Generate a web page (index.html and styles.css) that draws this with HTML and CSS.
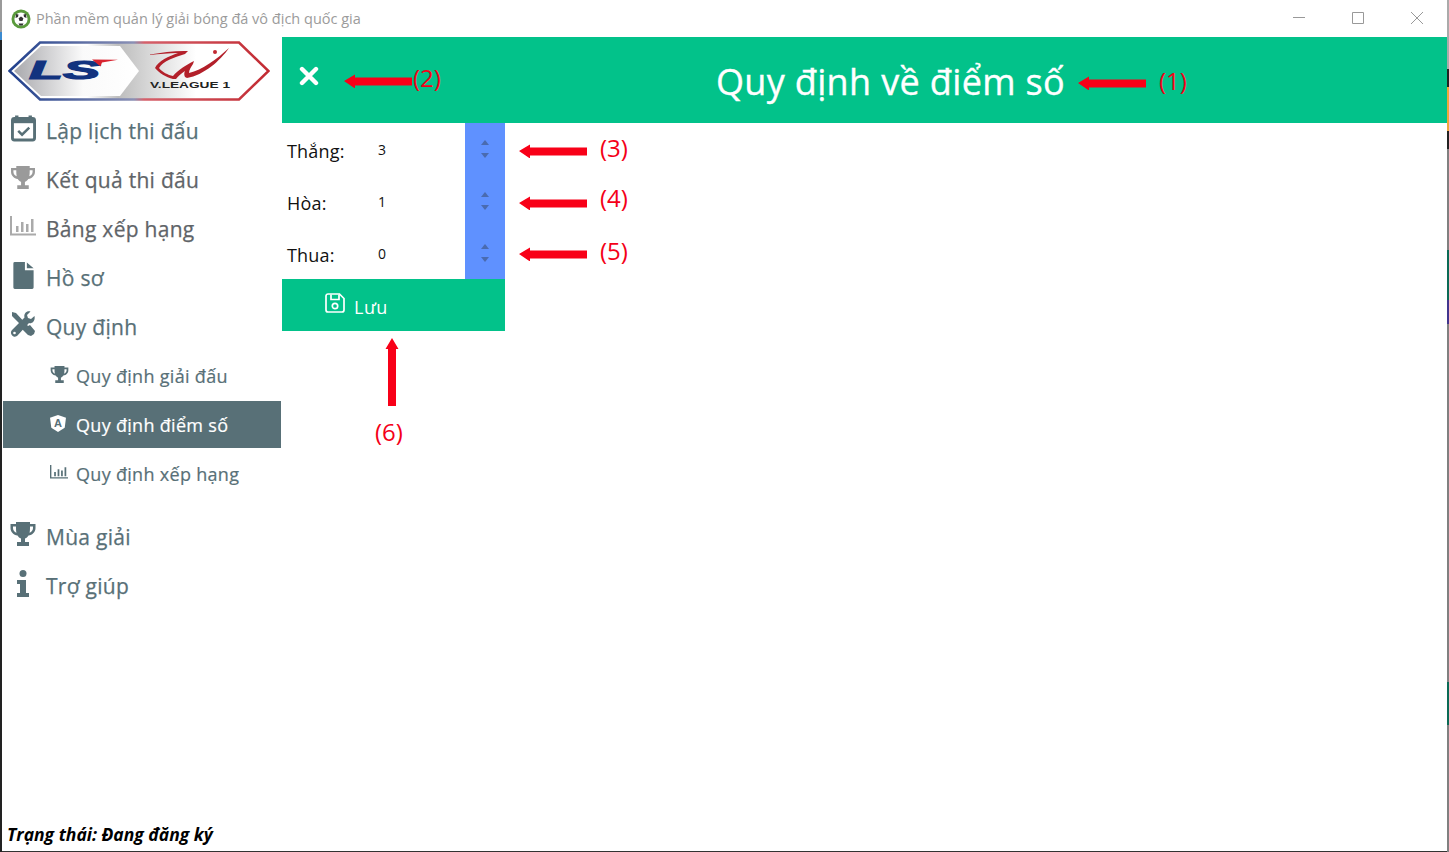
FILE: index.html
```html
<!DOCTYPE html>
<html lang="vi">
<head>
<meta charset="utf-8">
<title>Phần mềm quản lý giải bóng đá vô địch quốc gia</title>
<link rel="stylesheet" href="styles.css">
</head>
<body>
<div class="window">
  <header class="titlebar">
    <svg class="app-icon" viewBox="0 0 20 20"><circle cx="10" cy="10" r="9.500" fill="#5a9a3c"/><circle cx="10" cy="10" r="6.600" fill="#fff"/><path d="M10 7.500l2.400 1.700-.9 2.800H8.500l-.9-2.800zM5 5l2.500.5-.5 2.500-2.500 1zM15 5l-2.500.5.5 2.500 2.500 1zM7.500 14.500h5l-1 2h-3z" fill="#333"/></svg>
    <span class="app-title">Phần mềm quản lý giải bóng đá vô địch quốc gia</span>
    <div class="win-controls">
      <svg viewBox="0 0 12 12" class="win-btn"><path d="M0 5.500h12" stroke="#999" fill="none"/></svg>
      <svg viewBox="0 0 12 12" class="win-btn"><path d="M.5.500h11v11H.500z" stroke="#999" fill="none"/></svg>
      <svg viewBox="0 0 12 12" class="win-btn"><path d="M0 0l12 12M12 0L0 12" stroke="#999" fill="none"/></svg>
    </div>
  </header>
  <div class="body-row">
    <aside class="sidebar">
      <svg class="logo" viewBox="0 0 262 60">
        <defs>
          <linearGradient id="lgl" x1="0" x2="1"><stop offset="0" stop-color="#a9a9ad"/><stop offset=".55" stop-color="#fafafa"/><stop offset="1" stop-color="#fff"/></linearGradient>
          <linearGradient id="lgr" x1="0" x2="1"><stop offset="0" stop-color="#fff"/><stop offset=".3" stop-color="#fff"/><stop offset=".42" stop-color="#bdbdbd"/><stop offset=".72" stop-color="#fff"/><stop offset="1" stop-color="#fff"/></linearGradient>
          <linearGradient id="lb" x1="0" x2="1"><stop offset="0" stop-color="#1f3f8c"/><stop offset=".48" stop-color="#8a90b5"/><stop offset=".52" stop-color="#d5606a"/><stop offset="1" stop-color="#c22a32"/></linearGradient>
        </defs>
        <path d="M1.500 30L32 1.500H231L260.500 30 231 58.500H32z" fill="url(#lgr)" stroke="url(#lb)" stroke-width="2.500"/>
        <path d="M6 30L33 5H112L131 30 112 55H33z" fill="url(#lgl)"/>
        <text x="21" y="38" class="logo-ls" textLength="71" lengthAdjust="spacingAndGlyphs">LS</text>
        <path d="M84 18.500l26 .3-16 2.700-1.500 4z" fill="#d8232f"/>
        <path d="M142 13.500c12-2 26-4 38-3.500l-3 3c-10 3-22 7-26 14 3 4 9 7 14 8 5-6 13-11 21-15l-1 3c-2 3-4 6-4 9 13-3 28-14 40-25-9 13-25 27-42 30l-2-1c-1-2-1-4 0-6-4 3-7 5-9 8l-3 0c-7-2-14-6-18-11 3-7 14-12 23-15-9 0-19 1-28 2z" fill="#b3202a"/>
        <circle cx="207" cy="11" r="2" fill="#c22a32"/>
        <text x="142" y="47" class="logo-v" textLength="80" lengthAdjust="spacingAndGlyphs">V.LEAGUE 1</text>
      </svg>
      <nav class="nav">
        <a class="nav-item"><span class="nav-icon"><svg viewBox="0 0 26 28" width="25" height="28"><path d="M6 1v4M20 1v4" stroke="#587077" stroke-width="3.500"/><rect x="1.500" y="4" width="23" height="22.500" rx="2" fill="none" stroke="#587077" stroke-width="3"/><path d="M2 4h22v5H2z" fill="#587077"/><path d="M7.500 17l4 4 7.500-7.500" fill="none" stroke="#587077" stroke-width="2.600"/></svg></span>Lập lịch thi đấu</a>
        <a class="nav-item muted"><span class="nav-icon"><svg viewBox="0 0 26 24" width="26" height="23"><path d="M6 0h14v2h5.500v4c0 4-3 7-7 7.500-1 1.500-2 2.500-3.500 3V20h4v4H7v-4h4v-3.500C9.500 16 8.500 15 7.500 13.500 3.500 13 .5 10 .5 6V2H6zM3 4.500V6c0 2 1.200 4 3.500 4.800C6 9 6 7 6 4.500zM23 4.500h-3c0 2.500 0 4.500-.5 6.300C21.800 10 23 8 23 6z" fill="#9a9a9a"/></svg></span>Kết quả thi đấu</a>
        <a class="nav-item muted"><span class="nav-icon"><svg viewBox="0 0 26 20" width="26" height="20"><path d="M1 0v18.500h25" fill="none" stroke="#aaa" stroke-width="2"/><path d="M6 10h2.500v6H6zM11 6h2.500v10H11zM16 8h2.500v8H16zM21 3h2.500v13H21z" fill="#aaa"/></svg></span>Bảng xếp hạng</a>
        <a class="nav-item"><span class="nav-icon"><svg viewBox="0 0 22 28" width="22" height="27"><path d="M1 1.500A1.500 1.500 0 0 1 2.500 0H13v8.500h9v18a1.500 1.500 0 0 1-1.500 1.500h-18A1.500 1.500 0 0 1 1 26.500zM15 .500L22 6.500h-7z" fill="#587077"/></svg></span>Hồ sơ</a>
        <a class="nav-item"><span class="nav-icon"><svg viewBox="0 0 26 26" width="26" height="26"><path d="M2 1l4 1 12 13 2-1 5 6-1 3-3 2-3-1-6-6 1-2L2 5z" fill="#587077"/><path d="M24.500 5l-3.500 3-3-1-1-3 3.500-3.500c-3.500-1-7 2-6 6L2 19c-2 2-1 5 1.500 6.500 2 .5 3 0 4-1L19 12c3 1 6.500-2 5.500-7z" fill="#587077"/><circle cx="4.500" cy="22" r="1.300" fill="#fff"/></svg></span>Quy định</a>
        <a class="sub-item"><span class="sub-icon"><svg viewBox="0 0 26 24" width="19" height="17"><path d="M6 0h14v2h5.500v4c0 4-3 7-7 7.500-1 1.500-2 2.500-3.500 3V20h4v4H7v-4h4v-3.500C9.500 16 8.500 15 7.500 13.500 3.500 13 .5 10 .5 6V2H6zM3 4.500V6c0 2 1.200 4 3.500 4.800C6 9 6 7 6 4.500zM23 4.500h-3c0 2.500 0 4.500-.5 6.300C21.800 10 23 8 23 6z" fill="#587077"/></svg></span>Quy định giải đấu</a>
        <a class="sub-item active"><span class="sub-icon"><svg viewBox="0 0 16 17" width="16" height="17"><path d="M8 0l8 2.800-1.300 10L8 17l-6.700-4.200L0 2.800z" fill="#fff"/><text x="8" y="12" class="ng-a">A</text></svg></span>Quy định điểm số</a>
        <a class="sub-item"><span class="sub-icon"><svg viewBox="0 0 26 20" width="18" height="14"><path d="M1 0v18.500h25" fill="none" stroke="#587077" stroke-width="2"/><path d="M6 10h2.500v6H6zM11 6h2.500v10H11zM16 8h2.500v8H16zM21 3h2.500v13H21z" fill="#587077"/></svg></span>Quy định xếp hạng</a>
        <a class="nav-item season"><span class="nav-icon"><svg viewBox="0 0 26 24" width="26" height="24"><path d="M6 0h14v2h5.500v4c0 4-3 7-7 7.500-1 1.500-2 2.500-3.500 3V20h4v4H7v-4h4v-3.500C9.500 16 8.500 15 7.500 13.500 3.500 13 .5 10 .5 6V2H6zM3 4.500V6c0 2 1.200 4 3.500 4.800C6 9 6 7 6 4.500zM23 4.500h-3c0 2.500 0 4.500-.5 6.300C21.800 10 23 8 23 6z" fill="#587077"/></svg></span>Mùa giải</a>
        <a class="nav-item"><span class="nav-icon"><svg viewBox="0 0 12 27" width="12" height="27"><circle cx="6" cy="3.500" r="3.500" fill="#587077"/><path d="M0 10h9v13h3v4H0v-4h3v-9H0z" fill="#587077"/></svg></span>Trợ giúp</a>
      </nav>
      <div class="status">Trạng thái: Đang đăng ký</div>
    </aside>
    <main class="content">
      <div class="banner">
        <svg class="close" viewBox="0 0 20 20"><path d="M3 3l14 14M17 3L3 17" stroke="#fff" stroke-width="4.400" stroke-linecap="round"/></svg>
        <h1 class="banner-title">Quy định về điểm số</h1>
      </div>
      <form class="form">
        <div class="row"><label class="lbl">Thắng:</label><span class="val">3</span><span class="spin"><i class="up"></i><i class="down"></i></span></div>
        <div class="row"><label class="lbl">Hòa:</label><span class="val">1</span><span class="spin"><i class="up"></i><i class="down"></i></span></div>
        <div class="row"><label class="lbl">Thua:</label><span class="val">0</span><span class="spin"><i class="up"></i><i class="down"></i></span></div>
        <div class="save">
          <svg viewBox="0 0 20 20" width="20" height="20"><path d="M3 1h11.500L19 5.500V17a2 2 0 0 1-2 2H3a2 2 0 0 1-2-2V3a2 2 0 0 1 2-2z" fill="none" stroke="#fff" stroke-width="1.700"/><path d="M6 1.500v5h8v-5" fill="none" stroke="#fff" stroke-width="1.700"/><circle cx="10" cy="13" r="2.700" fill="none" stroke="#fff" stroke-width="1.700"/></svg>
          <span class="save-label">Lưu</span>
        </div>
      </form>
    </main>
  </div>
</div>
<div class="note n1"><svg class="arrow-h" viewBox="0 0 68 14"><path d="M0 7L11 .5V3.500h57v8H11v3z" fill="#f80018"/></svg><span>(1)</span></div>
<div class="note n2"><svg class="arrow-h" viewBox="0 0 68 14"><path d="M0 7L11 .5V3.500h57v8H11v3z" fill="#f80018"/></svg><span>(2)</span></div>
<div class="note n3"><svg class="arrow-h" viewBox="0 0 68 14"><path d="M0 7L11 .5V3.500h57v8H11v3z" fill="#f80018"/></svg><span>(3)</span></div>
<div class="note n4"><svg class="arrow-h" viewBox="0 0 68 14"><path d="M0 7L11 .5V3.500h57v8H11v3z" fill="#f80018"/></svg><span>(4)</span></div>
<div class="note n5"><svg class="arrow-h" viewBox="0 0 68 14"><path d="M0 7L11 .5V3.500h57v8H11v3z" fill="#f80018"/></svg><span>(5)</span></div>
<svg class="arrow-v" viewBox="0 0 14 68"><path d="M7 0l6.500 11H11v57H3V11H.5z" fill="#f80018"/></svg>
<span class="note-six">(6)</span>
</body>
</html>
```
FILE: styles.css
```css
* { box-sizing: border-box; }
html, body { margin: 0; height: 100%; overflow: hidden; background: #fff; }
body { font-family: "Open Sans", "Noto Sans", sans-serif; position: relative; }
.window {
  width: 1449px; height: 852px; display: flex; flex-direction: column;
  padding: 0 2px 1px 2px;
  background:
    linear-gradient(#9a9a9a 0 32px, #3a8ad0 32px 40px, #222 40px) left / 2px 100% no-repeat,
    linear-gradient(#aaa 0 69px, #222 69px 87px, #f0a63c 87px 131px, #222 131px 149px, #808080 149px 250px, #0a6a55 250px 300px, #41358e 300px 324px, #808080 324px 682px, #0a6a55 682px 725px, #808080 725px) right / 2px 100% no-repeat,
    linear-gradient(#333, #333) bottom / 100% 1px no-repeat,
    #fff;
}
.titlebar { height: 37px; flex: none; display: flex; align-items: center; padding: 0 0 0 9px; }
.app-icon { width: 20px; height: 20px; flex: none; }
.app-title { font-size: 14.5px; color: #9b9b9b; margin-left: 5px; }
.win-controls { margin-left: auto; display: flex; gap: 47px; padding: 0 24px 1px 0; align-items: center; }
.win-btn { width: 12px; height: 12px; display: block; }
.body-row { flex: 1; display: flex; min-height: 0; }
.sidebar { width: 280px; flex: none; display: flex; flex-direction: column; position: relative; }
.logo { width: 262px; height: 60px; display: block; margin: 4px 0 0 6px; flex: none; }
.logo-ls { font: italic 700 25px "Liberation Sans", sans-serif; fill: #12337f; stroke: #12337f; stroke-width: 1.2px; }
.logo-v { font: 700 9.500px "Liberation Sans", sans-serif; fill: #222; }
.ng-a { font: 700 11px "Liberation Sans", sans-serif; fill: #587077; text-anchor: middle; }
.nav { display: flex; flex-direction: column; padding-left: 1px; margin-top: 5px; }
.nav-item { height: 49px; display: flex; align-items: center; font-size: 21px; color: #587077; letter-spacing: 0.28px; -webkit-text-stroke: 0.25px currentColor; }
.nav-item.muted { color: #5f6468; }
.nav-icon { width: 43px; display: flex; justify-content: center; padding: 0 3px 5px 0; flex: none; }
.sub-item { height: 49px; display: flex; align-items: center; font-size: 18px; color: #587077; padding-left: 47px; letter-spacing: 0.3px; -webkit-text-stroke: 0.2px currentColor; }
.sub-icon { width: 26px; flex: none; display: flex; padding-bottom: 3px; }
.sub-item.active { background: #587077; color: #fff; height: 47px; margin: 1px 1px 1px 0; }
.season { margin-top: 14px; }
.status { position: absolute; left: 5px; bottom: 5px; font: italic 700 17.500px "Open Sans", sans-serif; color: #000; }
.content { flex: 1; display: flex; flex-direction: column; min-width: 0; }
.banner { height: 86px; background: #02c28a; display: flex; align-items: center; position: relative; flex: none; }
.close { width: 20px; height: 20px; margin-left: 17px; margin-bottom: 8px; flex: none; }
.banner-title { flex: 1; margin: 0; padding: 2px 0 0 15px; text-align: center; font-size: 36px; font-weight: 400; color: #fff; letter-spacing: 0.35px; -webkit-text-stroke: 0.35px #fff; }
.form { width: 223px; display: flex; flex-direction: column; }
.row { height: 52px; display: flex; align-items: center; background: #fff; }
.lbl { width: 96px; padding: 3px 0 0 5px; font-size: 18px; color: #111; letter-spacing: 0.2px; }
.val { flex: 1; font-size: 14px; color: #111; }
.spin { width: 40px; height: 100%; background: #5f91ff; display: flex; flex-direction: column; align-items: center; justify-content: center; gap: 8px; }
.spin i { display: block; width: 0; height: 0; border-left: 4px solid transparent; border-right: 4px solid transparent; }
.spin .up { border-bottom: 5px solid #4a6bb0; }
.spin .down { border-top: 5px solid #4a6bb0; }
.save { height: 52px; background: #02c28a; display: flex; align-items: center; padding-left: 43px; gap: 9px; color: #fff; font-size: 18px; }
.save svg { margin-bottom: 4px; }
.save-label { padding-top: 4px; letter-spacing: 0.5px; }
.note { position: absolute; display: flex; align-items: flex-start; color: #f40018; font-size: 24px; gap: 13px; line-height: 1; }
.arrow-h { width: 68px; height: 14px; flex: none; display: block; }
.n1 { left: 1078px; top: 69px; }
.n1 .arrow-h { margin-top: 7px; }
.n2 { left: 344px; top: 66px; gap: 1px; }
.n2 .arrow-h { margin-top: 8px; }
.n3 { left: 519px; top: 136px; }
.n3 .arrow-h { margin-top: 8px; }
.n4 { left: 519px; top: 186px; }
.n4 .arrow-h { margin-top: 10px; }
.n5 { left: 519px; top: 239px; }
.n5 .arrow-h { margin-top: 8px; }
.arrow-v { position: absolute; left: 385px; top: 338px; width: 14px; height: 68px; }
.note-six { position: absolute; left: 375px; top: 420px; color: #f40018; font-size: 24px; line-height: 1; }
```
